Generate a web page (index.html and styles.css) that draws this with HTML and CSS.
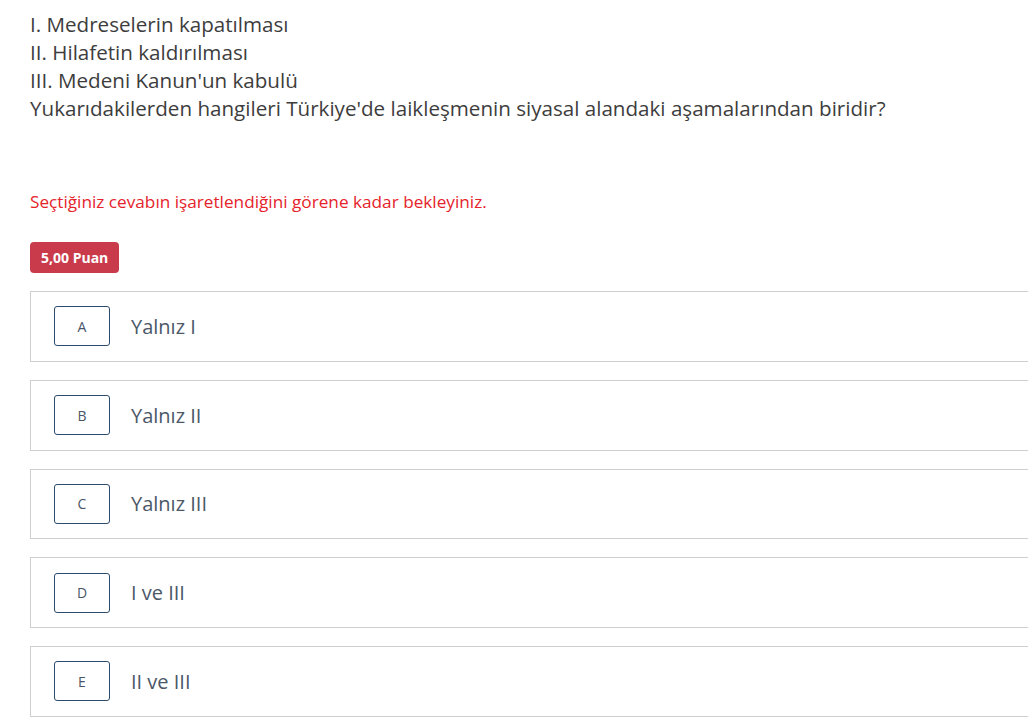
FILE: index.html
```html
<!DOCTYPE html>
<html lang="tr">
<head>
<meta charset="utf-8">
<link rel="stylesheet" href="styles.css">
</head>
<body>
<div class="page">
  <div class="question">
    <p>I. Medreselerin kapatılması</p>
    <p>II. Hilafetin kaldırılması</p>
    <p>III. Medeni Kanun'un kabulü</p>
    <p>Yukarıdakilerden hangileri Türkiye'de laikleşmenin siyasal alandaki aşamalarından biridir?</p>
  </div>
  <p class="warning">Seçtiğiniz cevabın işaretlendiğini görene kadar bekleyiniz.</p>
  <span class="badge">5,00 Puan</span>
  <div class="options">
    <div class="option"><span class="letter">A</span><span class="text">Yalnız I</span></div>
    <div class="option"><span class="letter">B</span><span class="text">Yalnız II</span></div>
    <div class="option"><span class="letter">C</span><span class="text">Yalnız III</span></div>
    <div class="option"><span class="letter">D</span><span class="text">I ve III</span></div>
    <div class="option"><span class="letter">E</span><span class="text">II ve III</span></div>
  </div>
</div>
</body>
</html>
```
FILE: styles.css
```css
html, body {
  margin: 0;
  padding: 0;
  background: #fff;
}
body {
  font-family: "Open Sans", "Noto Sans", sans-serif;
  overflow: hidden;
}
.page {
  padding: 10px 0 0 30px;
  overflow: hidden;
}
.question p {
  margin: 0;
  font-size: 20.6px;
  line-height: 28px;
  color: #3d3d3d;
}
.warning {
  margin: 68px 0 0;
  font-size: 17.2px;
  line-height: 24px;
  color: #e5232b;
}
.badge {
  display: inline-block;
  margin-top: 28px;
  background: #c93a4b;
  color: #fff;
  font-weight: 700;
  font-size: 14px;
  line-height: 31px;
  height: 31px;
  padding: 0 11px;
  border-radius: 4px;
}
.options {
  margin-top: 18px;
  display: flex;
  flex-direction: column;
  gap: 18px;
  margin-right: -20px;
}
.option {
  display: flex;
  align-items: center;
  height: 68.75px;
  border: 1px solid #cfcfcf;
  padding-left: 23px;
}
.letter {
  width: 54px;
  height: 38px;
  border: 1px solid #2d4b6e;
  border-radius: 3px;
  display: flex;
  align-items: center;
  justify-content: center;
  font-size: 14px;
  color: #4a5668;
}
.text {
  margin-left: 21px;
  font-size: 20px;
  color: #4b5868;
}
```
